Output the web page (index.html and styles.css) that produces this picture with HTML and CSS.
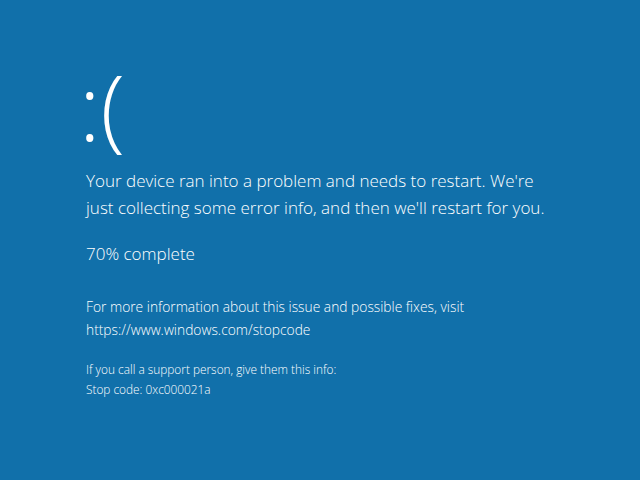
FILE: index.html
```html
<!DOCTYPE html>
<html>
<head>
<meta charset="utf-8">
<link rel="stylesheet" href="styles.css">
</head>
<body>
<main class="bsod">
  <div class="face">:(</div>
  <p class="lead">Your device ran into a problem and needs to restart. We're<br>just collecting some error info, and then we'll restart for you.</p>
  <p class="progress">70% complete</p>
  <p class="info">For more information about this issue and possible fixes, visit<br>https://www.windows.com/stopcode</p>
  <p class="support">If you call a support person, give them this info:<br>Stop code: 0xc000021a</p>
</main>
</body>
</html>
```

FILE: styles.css
```css
html, body {
  margin: 0;
  padding: 0;
  width: 640px;
  height: 480px;
  background: #1170aa;
  overflow: hidden;
}
.bsod {
  padding: 56px 0 0 86px;
  color: #ffffff;
  font-family: "Open Sans", "Noto Sans", sans-serif;
  font-weight: 300;
}
.face {
  height: 100px;
  margin: 0 0 11px -7px;
  font-size: 90px;
  line-height: 100px;
  font-weight: 300;
}
p { margin: 0; }
.lead {
  font-size: 17px;
  line-height: 27px;
}
.progress {
  font-size: 17px;
  line-height: 27px;
  margin-top: 19px;
}
.info {
  font-size: 13.8px;
  line-height: 23px;
  margin-top: 28px;
}
.support {
  font-size: 11.85px;
  line-height: 20px;
  margin-top: 18px;
}
```
